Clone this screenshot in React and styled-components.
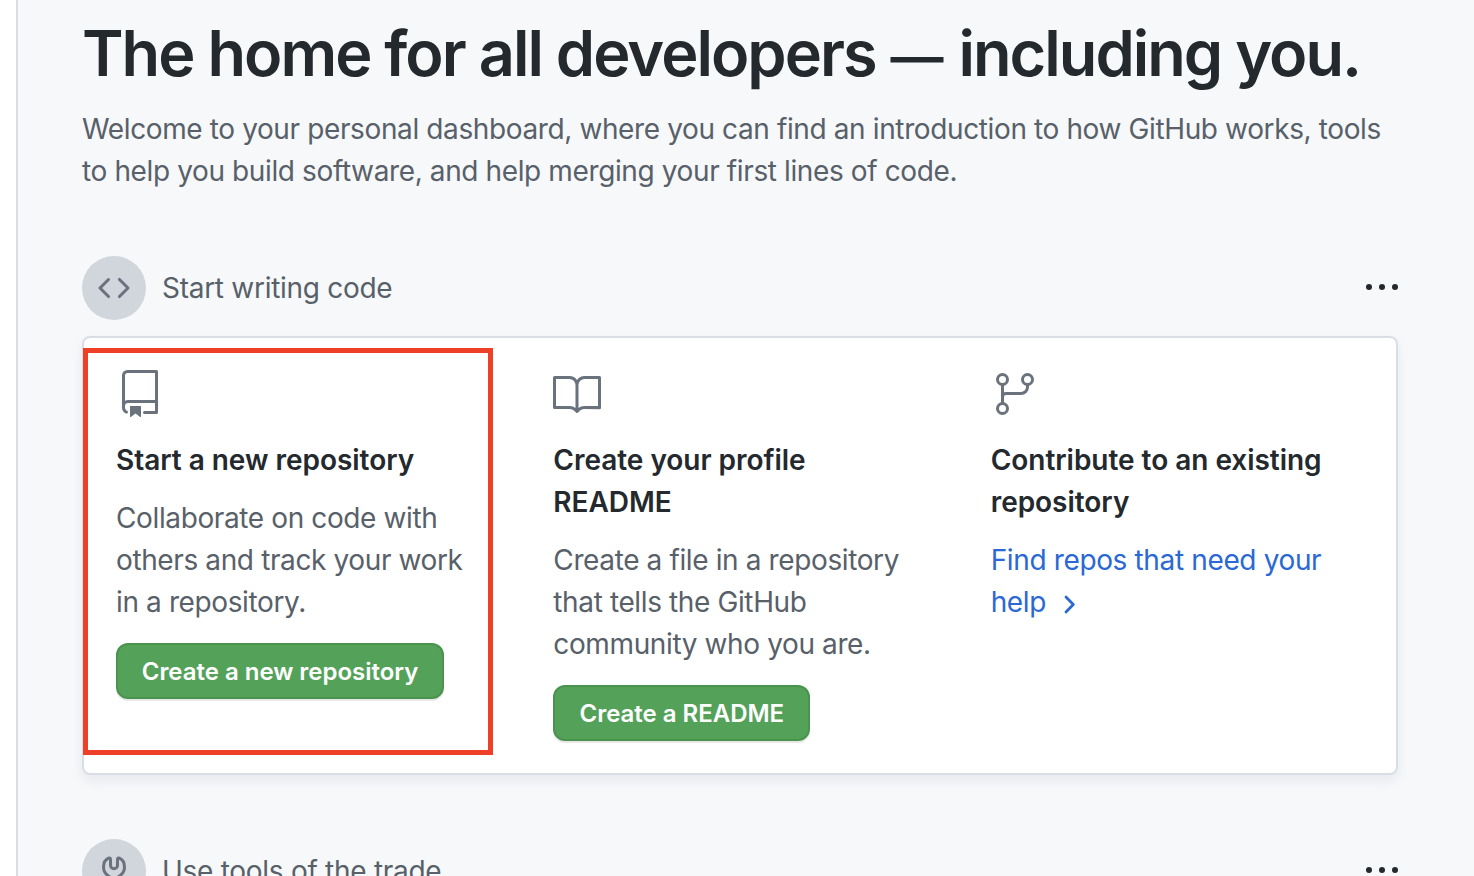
import React from "react";
import styled, { createGlobalStyle } from "styled-components";

const GlobalStyle = createGlobalStyle`
  * { box-sizing: border-box; }
  html, body { margin: 0; padding: 0; height: 100%; overflow: hidden; background: #fff; }
  body { font-family: Inter, "Liberation Sans", sans-serif; font-size: 28px; line-height: 42px; color: #24292e; -webkit-font-smoothing: antialiased; }
  h1, h2, h3, p { margin: 0; }
`;

const Page = styled.main`
  height: 876px;
  margin-left: 16px;
  padding: 14px 76px 0 64px;
  overflow: hidden;
  border-left: 2px solid #d8dee4;
  background: #f6f8fa;
`;

const Heading = styled.h1`
  height: 80px;
  font-size: 63px;
  line-height: 78px;
  font-weight: 600;
  letter-spacing: -1.97px;
  white-space: nowrap;
`;

const Dash = styled.span`
  font-size: 53px;
  line-height: 1;
  margin: 0 3px 0 1px;
`;

const Text = styled.p`
  color: #586069;
  font-weight: 400;
  letter-spacing: -0.38px;
  white-space: nowrap;
`;

const Intro = styled(Text)`
  margin-top: 14px;
`;

const SectionHeader = styled.header`
  display: flex;
  align-items: center;
  gap: 16px;
  height: 64px;
  margin-top: ${(p) => p.$top}px;
`;

const Badge = styled.span`
  display: flex;
  align-items: center;
  justify-content: center;
  width: 64px;
  height: 64px;
  border-radius: 50%;
  background: #d1d6dd;
  color: #6a737d;
`;

const SectionTitle = styled.h2`
  flex: 1;
  font-size: 28px;
  font-weight: 400;
  color: #586069;
  letter-spacing: -0.28px;
`;

const MenuButton = styled.button`
  display: flex;
  gap: 7px;
  margin: 0 0 2px 0;
  padding: 0;
  border: 0;
  background: none;
`;

const Dot = styled.span`
  width: 6px;
  height: 6px;
  border-radius: 50%;
  background: #24292e;
`;

const Card = styled.section`
  position: relative;
  display: grid;
  grid-template-columns: repeat(3, 1fr);
  height: 439px;
  margin-top: 16px;
  border: 2px solid #d8dee4;
  border-radius: 8px;
  background: #fff;
  box-shadow: 0 6px 12px rgba(149, 157, 165, 0.15);
`;

const Highlight = styled.div`
  position: absolute;
  left: -1px;
  top: 10px;
  width: 410px;
  height: 407px;
  border: 5px solid #ee4026;
  pointer-events: none;
`;

const Task = styled.article`
  display: flex;
  flex-direction: column;
  align-items: flex-start;
  padding: 32px;
`;

const TaskIcon = styled.svg`
  width: 48px;
  height: 48px;
  margin-bottom: 21px;
  color: #6a737d;
`;

const TaskTitle = styled.h3`
  margin-bottom: 16px;
  font-size: 28px;
  font-weight: 600;
  letter-spacing: -0.03px;
  white-space: nowrap;
`;

const Button = styled.button`
  width: ${(p) => p.$width}px;
  height: 56px;
  margin-top: 20px;
  padding: 2px 0 0;
  border: 2px solid #4a934e;
  border-radius: 12px;
  background: #54a25a;
  box-shadow: 0 2px 0 rgba(27, 31, 35, 0.1);
  color: #fff;
  font: 600 24px/40px Inter, "Liberation Sans", sans-serif;
  letter-spacing: -0.02px;
  white-space: nowrap;
`;

const Link = styled.a`
  color: #2a68d5;
  font-weight: 400;
  letter-spacing: -0.36px;
  white-space: nowrap;
`;

const Chevron = styled.svg`
  width: 14px;
  height: 20px;
  margin-left: 17px;
  vertical-align: -2px;
`;

const CodeIcon = () => (
  <svg width="32" height="32" viewBox="0 0 16 16" fill="currentColor">
    <path d="M4.72 3.22a.75.75 0 011.06 1.06L2.06 8l3.72 3.72a.75.75 0 11-1.06 1.06L.47 8.53a.75.75 0 010-1.06l4.25-4.25zm6.56 0a.75.75 0 10-1.06 1.06L13.94 8l-3.72 3.72a.75.75 0 101.06 1.06l4.25-4.25a.75.75 0 000-1.06l-4.25-4.25z" />
  </svg>
);

const WrenchIcon = () => (
  <svg width="32" height="32" viewBox="0 0 32 32" fill="none" stroke="currentColor" strokeWidth="3" strokeLinecap="round" strokeLinejoin="round">
    <path d="M12 22V29.5H20V22C23.6 20 26.5 16.5 26.5 12C26.5 8 24.5 4.6 21.5 3.2Q19.6 2.4 19.5 4.5V10.2A3.5 3.5 0 0 1 12.5 10.2V4.5Q12.4 2.4 10.5 3.2C7.5 4.6 5.5 8 5.5 12C5.5 16.5 8.4 20 12 22Z" />
  </svg>
);

const RepoIcon = () => (
  <TaskIcon viewBox="0 0 24 24" fill="currentColor">
    <path fillRule="evenodd" d="M3 2.75A2.75 2.75 0 015.75 0h14.5a.75.75 0 01.75.75v20.5a.75.75 0 01-.75.75h-6a.75.75 0 010-1.5h5.25v-4H6A1.5 1.5 0 004.5 18v.75c0 .716.43 1.334 1.05 1.605a.75.75 0 01-.6 1.374A3.25 3.25 0 013 18.75v-16zM19.5 1.5V15H6c-.546 0-1.059.146-1.5.401V2.75c0-.69.56-1.25 1.25-1.25H19.5z" />
    <path d="M7 18.25a.25.25 0 01.25-.25h5a.25.25 0 01.25.25v5.01a.25.25 0 01-.397.201l-2.206-1.604a.25.25 0 00-.294 0L7.397 23.46a.25.25 0 01-.397-.2v-5.01z" />
  </TaskIcon>
);

const BookIcon = () => (
  <TaskIcon viewBox="0 0 24 24" fill="currentColor">
    <path fillRule="evenodd" d="M0 3.75A.75.75 0 01.75 3h7.497c1.566 0 2.945.8 3.751 2.014A4.496 4.496 0 0115.75 3h7.5a.75.75 0 01.75.75v15.063a.75.75 0 01-.755.75l-7.682-.052a3 3 0 00-2.142.878l-.89.891a.75.75 0 01-1.061 0l-.902-.901a3 3 0 00-2.121-.879H.75a.75.75 0 01-.75-.75v-15zm11.247 3.747a3 3 0 00-3-2.997H1.5V18h6.947a4.5 4.5 0 012.803.98l-.003-11.483zm1.503 11.485V7.5a3 3 0 013-3h6.75v13.558l-6.927-.047a4.5 4.5 0 00-2.823.971z" />
  </TaskIcon>
);

const BranchIcon = () => (
  <TaskIcon viewBox="0 0 24 24" fill="none" stroke="currentColor" strokeWidth="1.5">
    <circle cx="5.75" cy="4.75" r="2.5" />
    <circle cx="18.25" cy="4.75" r="2.5" />
    <circle cx="5.75" cy="19.25" r="2.5" />
    <path d="M5.75 7.25v9.5M18.25 7.25v1.25a3.25 3.25 0 0 1-3.25 3.25H7.5a1.75 1.75 0 0 0-1.75 1.75" />
  </TaskIcon>
);

const Menu = () => (
  <MenuButton aria-label="More options">
    <Dot />
    <Dot />
    <Dot />
  </MenuButton>
);

export default function App() {
  return (
    <>
      <GlobalStyle />
      <Page>
        <Heading>The home for all developers <Dash>—</Dash> including you.</Heading>
        <Intro>
          Welcome to your personal dashboard, where you can find an introduction to how GitHub works, tools
          <br />
          to help you build software, and help merging your first lines of code.
        </Intro>
        <SectionHeader $top={64}>
          <Badge><CodeIcon /></Badge>
          <SectionTitle>Start writing code</SectionTitle>
          <Menu />
        </SectionHeader>
        <Card>
          <Task>
            <RepoIcon />
            <TaskTitle>Start a new repository</TaskTitle>
            <Text>
              Collaborate on code with<br />others and track your work<br />in a repository.
            </Text>
            <Button $width={328}>Create a new repository</Button>
          </Task>
          <Task>
            <BookIcon />
            <TaskTitle>Create your profile<br />README</TaskTitle>
            <Text>
              Create a file in a repository<br />that tells the GitHub<br />community who you are.
            </Text>
            <Button $width={257}>Create a README</Button>
          </Task>
          <Task>
            <BranchIcon />
            <TaskTitle>Contribute to an existing<br />repository</TaskTitle>
            <Link>
              Find repos that need your<br />help
              <Chevron viewBox="0 0 14 20" fill="none" stroke="currentColor" strokeWidth="2.8" strokeLinecap="round" strokeLinejoin="round">
                <path d="M3 3L10.3 10.5L3 18" />
              </Chevron>
            </Link>
          </Task>
          <Highlight />
        </Card>
        <SectionHeader $top={64}>
          <Badge><WrenchIcon /></Badge>
          <SectionTitle>Use tools of the trade</SectionTitle>
          <Menu />
        </SectionHeader>
      </Page>
    </>
  );
}
